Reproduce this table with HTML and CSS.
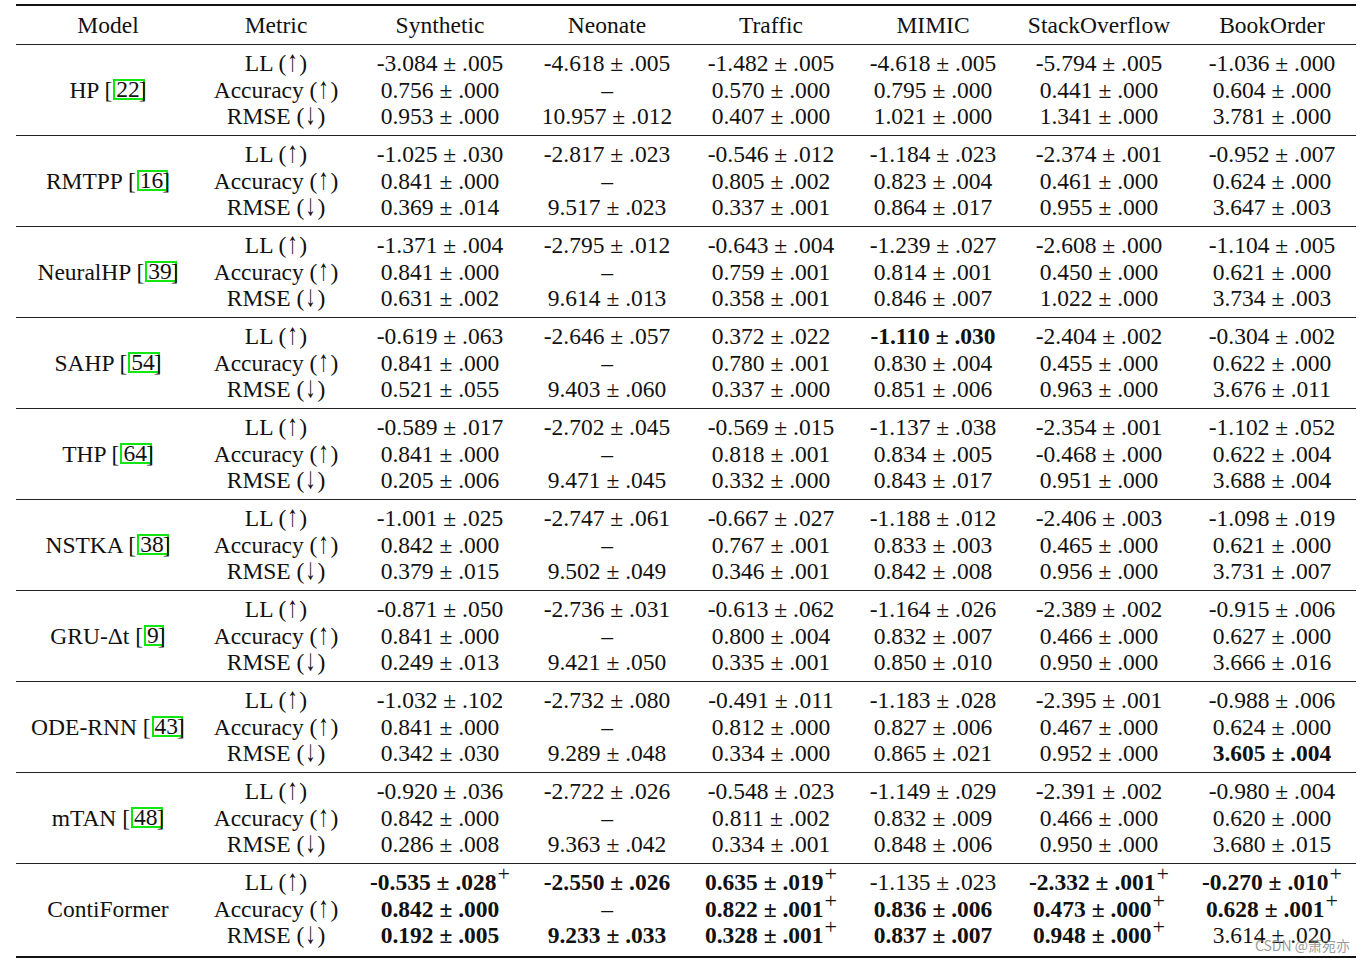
FILE: index.html
```html
<!DOCTYPE html>
<html>
<head>
<meta charset="utf-8">
<link rel="stylesheet" href="styles.css">
</head>
<body>
<div class="table">
  <div class="row head">
    <div class="cell">Model</div>
    <div class="cell">Metric</div>
    <div class="cell">Synthetic</div>
    <div class="cell">Neonate</div>
    <div class="cell">Traffic</div>
    <div class="cell">MIMIC</div>
    <div class="cell">StackOverflow</div>
    <div class="cell">BookOrder</div>
  </div>

  <div class="row group">
    <div class="cell model">HP [<span class="cite">22</span><span class="rb">]</span></div>
    <div class="cell"><div>LL (<span class="arr">↑</span>)</div><div>Accuracy (<span class="arr">↑</span>)</div><div>RMSE (<span class="arr">↓</span>)</div></div>
    <div class="cell"><div>-3.084 ± .005</div><div>0.756 ± .000</div><div>0.953 ± .000</div></div>
    <div class="cell"><div>-4.618 ± .005</div><div>–</div><div>10.957 ± .012</div></div>
    <div class="cell"><div>-1.482 ± .005</div><div>0.570 ± .000</div><div>0.407 ± .000</div></div>
    <div class="cell"><div>-4.618 ± .005</div><div>0.795 ± .000</div><div>1.021 ± .000</div></div>
    <div class="cell"><div>-5.794 ± .005</div><div>0.441 ± .000</div><div>1.341 ± .000</div></div>
    <div class="cell"><div>-1.036 ± .000</div><div>0.604 ± .000</div><div>3.781 ± .000</div></div>
  </div>

  <div class="row group">
    <div class="cell model">RMTPP [<span class="cite">16</span><span class="rb">]</span></div>
    <div class="cell"><div>LL (<span class="arr">↑</span>)</div><div>Accuracy (<span class="arr">↑</span>)</div><div>RMSE (<span class="arr">↓</span>)</div></div>
    <div class="cell"><div>-1.025 ± .030</div><div>0.841 ± .000</div><div>0.369 ± .014</div></div>
    <div class="cell"><div>-2.817 ± .023</div><div>–</div><div>9.517 ± .023</div></div>
    <div class="cell"><div>-0.546 ± .012</div><div>0.805 ± .002</div><div>0.337 ± .001</div></div>
    <div class="cell"><div>-1.184 ± .023</div><div>0.823 ± .004</div><div>0.864 ± .017</div></div>
    <div class="cell"><div>-2.374 ± .001</div><div>0.461 ± .000</div><div>0.955 ± .000</div></div>
    <div class="cell"><div>-0.952 ± .007</div><div>0.624 ± .000</div><div>3.647 ± .003</div></div>
  </div>

  <div class="row group">
    <div class="cell model">NeuralHP [<span class="cite">39</span><span class="rb">]</span></div>
    <div class="cell"><div>LL (<span class="arr">↑</span>)</div><div>Accuracy (<span class="arr">↑</span>)</div><div>RMSE (<span class="arr">↓</span>)</div></div>
    <div class="cell"><div>-1.371 ± .004</div><div>0.841 ± .000</div><div>0.631 ± .002</div></div>
    <div class="cell"><div>-2.795 ± .012</div><div>–</div><div>9.614 ± .013</div></div>
    <div class="cell"><div>-0.643 ± .004</div><div>0.759 ± .001</div><div>0.358 ± .001</div></div>
    <div class="cell"><div>-1.239 ± .027</div><div>0.814 ± .001</div><div>0.846 ± .007</div></div>
    <div class="cell"><div>-2.608 ± .000</div><div>0.450 ± .000</div><div>1.022 ± .000</div></div>
    <div class="cell"><div>-1.104 ± .005</div><div>0.621 ± .000</div><div>3.734 ± .003</div></div>
  </div>

  <div class="row group">
    <div class="cell model">SAHP [<span class="cite">54</span><span class="rb">]</span></div>
    <div class="cell"><div>LL (<span class="arr">↑</span>)</div><div>Accuracy (<span class="arr">↑</span>)</div><div>RMSE (<span class="arr">↓</span>)</div></div>
    <div class="cell"><div>-0.619 ± .063</div><div>0.841 ± .000</div><div>0.521 ± .055</div></div>
    <div class="cell"><div>-2.646 ± .057</div><div>–</div><div>9.403 ± .060</div></div>
    <div class="cell"><div>0.372 ± .022</div><div>0.780 ± .001</div><div>0.337 ± .000</div></div>
    <div class="cell"><div class="b">-1.110 ± .030</div><div>0.830 ± .004</div><div>0.851 ± .006</div></div>
    <div class="cell"><div>-2.404 ± .002</div><div>0.455 ± .000</div><div>0.963 ± .000</div></div>
    <div class="cell"><div>-0.304 ± .002</div><div>0.622 ± .000</div><div>3.676 ± .011</div></div>
  </div>

  <div class="row group">
    <div class="cell model">THP [<span class="cite">64</span><span class="rb">]</span></div>
    <div class="cell"><div>LL (<span class="arr">↑</span>)</div><div>Accuracy (<span class="arr">↑</span>)</div><div>RMSE (<span class="arr">↓</span>)</div></div>
    <div class="cell"><div>-0.589 ± .017</div><div>0.841 ± .000</div><div>0.205 ± .006</div></div>
    <div class="cell"><div>-2.702 ± .045</div><div>–</div><div>9.471 ± .045</div></div>
    <div class="cell"><div>-0.569 ± .015</div><div>0.818 ± .001</div><div>0.332 ± .000</div></div>
    <div class="cell"><div>-1.137 ± .038</div><div>0.834 ± .005</div><div>0.843 ± .017</div></div>
    <div class="cell"><div>-2.354 ± .001</div><div>-0.468 ± .000</div><div>0.951 ± .000</div></div>
    <div class="cell"><div>-1.102 ± .052</div><div>0.622 ± .004</div><div>3.688 ± .004</div></div>
  </div>

  <div class="row group">
    <div class="cell model">NSTKA [<span class="cite">38</span><span class="rb">]</span></div>
    <div class="cell"><div>LL (<span class="arr">↑</span>)</div><div>Accuracy (<span class="arr">↑</span>)</div><div>RMSE (<span class="arr">↓</span>)</div></div>
    <div class="cell"><div>-1.001 ± .025</div><div>0.842 ± .000</div><div>0.379 ± .015</div></div>
    <div class="cell"><div>-2.747 ± .061</div><div>–</div><div>9.502 ± .049</div></div>
    <div class="cell"><div>-0.667 ± .027</div><div>0.767 ± .001</div><div>0.346 ± .001</div></div>
    <div class="cell"><div>-1.188 ± .012</div><div>0.833 ± .003</div><div>0.842 ± .008</div></div>
    <div class="cell"><div>-2.406 ± .003</div><div>0.465 ± .000</div><div>0.956 ± .000</div></div>
    <div class="cell"><div>-1.098 ± .019</div><div>0.621 ± .000</div><div>3.731 ± .007</div></div>
  </div>

  <div class="row group">
    <div class="cell model">GRU-Δt [<span class="cite">9</span><span class="rb">]</span></div>
    <div class="cell"><div>LL (<span class="arr">↑</span>)</div><div>Accuracy (<span class="arr">↑</span>)</div><div>RMSE (<span class="arr">↓</span>)</div></div>
    <div class="cell"><div>-0.871 ± .050</div><div>0.841 ± .000</div><div>0.249 ± .013</div></div>
    <div class="cell"><div>-2.736 ± .031</div><div>–</div><div>9.421 ± .050</div></div>
    <div class="cell"><div>-0.613 ± .062</div><div>0.800 ± .004</div><div>0.335 ± .001</div></div>
    <div class="cell"><div>-1.164 ± .026</div><div>0.832 ± .007</div><div>0.850 ± .010</div></div>
    <div class="cell"><div>-2.389 ± .002</div><div>0.466 ± .000</div><div>0.950 ± .000</div></div>
    <div class="cell"><div>-0.915 ± .006</div><div>0.627 ± .000</div><div>3.666 ± .016</div></div>
  </div>

  <div class="row group">
    <div class="cell model">ODE-RNN [<span class="cite">43</span><span class="rb">]</span></div>
    <div class="cell"><div>LL (<span class="arr">↑</span>)</div><div>Accuracy (<span class="arr">↑</span>)</div><div>RMSE (<span class="arr">↓</span>)</div></div>
    <div class="cell"><div>-1.032 ± .102</div><div>0.841 ± .000</div><div>0.342 ± .030</div></div>
    <div class="cell"><div>-2.732 ± .080</div><div>–</div><div>9.289 ± .048</div></div>
    <div class="cell"><div>-0.491 ± .011</div><div>0.812 ± .000</div><div>0.334 ± .000</div></div>
    <div class="cell"><div>-1.183 ± .028</div><div>0.827 ± .006</div><div>0.865 ± .021</div></div>
    <div class="cell"><div>-2.395 ± .001</div><div>0.467 ± .000</div><div>0.952 ± .000</div></div>
    <div class="cell"><div>-0.988 ± .006</div><div>0.624 ± .000</div><div class="b">3.605 ± .004</div></div>
  </div>

  <div class="row group">
    <div class="cell model">mTAN [<span class="cite">48</span><span class="rb">]</span></div>
    <div class="cell"><div>LL (<span class="arr">↑</span>)</div><div>Accuracy (<span class="arr">↑</span>)</div><div>RMSE (<span class="arr">↓</span>)</div></div>
    <div class="cell"><div>-0.920 ± .036</div><div>0.842 ± .000</div><div>0.286 ± .008</div></div>
    <div class="cell"><div>-2.722 ± .026</div><div>–</div><div>9.363 ± .042</div></div>
    <div class="cell"><div>-0.548 ± .023</div><div>0.811 ± .002</div><div>0.334 ± .001</div></div>
    <div class="cell"><div>-1.149 ± .029</div><div>0.832 ± .009</div><div>0.848 ± .006</div></div>
    <div class="cell"><div>-2.391 ± .002</div><div>0.466 ± .000</div><div>0.950 ± .000</div></div>
    <div class="cell"><div>-0.980 ± .004</div><div>0.620 ± .000</div><div>3.680 ± .015</div></div>
  </div>

  <div class="row group last">
    <div class="cell model">ContiFormer</div>
    <div class="cell"><div>LL (<span class="arr">↑</span>)</div><div>Accuracy (<span class="arr">↑</span>)</div><div>RMSE (<span class="arr">↓</span>)</div></div>
    <div class="cell"><div><span class="b">-0.535 ± .028</span><sup class="plus">+</sup></div><div class="b">0.842 ± .000</div><div class="b">0.192 ± .005</div></div>
    <div class="cell"><div class="b">-2.550 ± .026</div><div>–</div><div class="b">9.233 ± .033</div></div>
    <div class="cell"><div><span class="b">0.635 ± .019</span><sup class="plus">+</sup></div><div><span class="b">0.822 ± .001</span><sup class="plus">+</sup></div><div><span class="b">0.328 ± .001</span><sup class="plus">+</sup></div></div>
    <div class="cell"><div>-1.135 ± .023</div><div class="b">0.836 ± .006</div><div class="b">0.837 ± .007</div></div>
    <div class="cell"><div><span class="b">-2.332 ± .001</span><sup class="plus">+</sup></div><div><span class="b">0.473 ± .000</span><sup class="plus">+</sup></div><div><span class="b">0.948 ± .000</span><sup class="plus">+</sup></div></div>
    <div class="cell"><div><span class="b">-0.270 ± .010</span><sup class="plus">+</sup></div><div><span class="b">0.628 ± .001</span><sup class="plus">+</sup></div><div>3.614 ± .020</div></div>
  </div>

  <div class="watermark">CSDN @萧宛亦</div>
</div>
</body>
</html>
```

FILE: styles.css
```css
html, body {
  margin: 0;
  padding: 0;
  background: #ffffff;
}

body {
  font-family: "Liberation Serif", "Times New Roman", serif;
  font-size: 23.5px;
  color: #111;
  padding: 4px 0 0 16px;
}

.table {
  position: relative;
  width: 1340px;
  border-top: 2px solid #111;
  border-bottom: 2px solid #111;
}

.row {
  display: grid;
  grid-template-columns: 184px 152px 176px 158px 170px 154px 178px 168px;
}

.head {
  height: 38px;
  align-items: center;
  border-bottom: 1px solid #222;
}

.head .cell {
  text-align: center;
  line-height: 26px;
}

.group {
  padding: 5px 0 5.5px;
  border-bottom: 1px solid #222;
}

.group.last {
  border-bottom: none;
  padding-bottom: 7.5px;
}

.cell {
  text-align: center;
  line-height: 26.5px;
  white-space: nowrap;
}

.group .cell > div {
  height: 26.5px;
  overflow: visible;
}

.model {
  display: flex;
  align-items: center;
  justify-content: center;
}

.arr {
  font-family: "Liberation Serif", serif;
  font-size: 30px;
  line-height: 16px;
  display: inline-block;
  transform: scaleX(0.7);
  margin: 0 -1px;
}

.cite {
  display: inline-block;
  border: 2px solid #11e611;
  line-height: 17px;
  padding: 0 3px 0 1px;
  margin-left: 1px;
}

.rb {
  margin-left: -6px;
}

.b {
  font-weight: bold;
}

.plus {
  font-size: 22px;
  font-weight: normal;
  line-height: 0;
  vertical-align: 9px;
  margin-left: 1px;
}

.watermark {
  position: absolute;
  right: 6px;
  bottom: 3px;
  font-family: "Noto Sans CJK SC", "Noto Sans", sans-serif;
  font-size: 14px;
  color: rgba(120, 120, 120, 0.75);
  line-height: 16px;
}
```
